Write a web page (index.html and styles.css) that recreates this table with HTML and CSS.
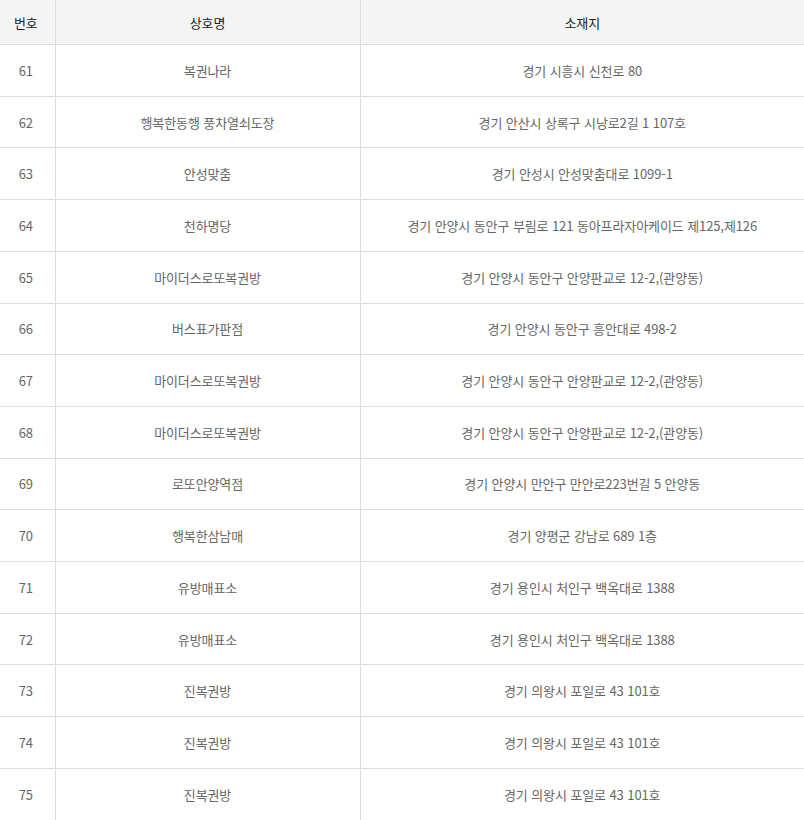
FILE: index.html
```html
<!DOCTYPE html>
<html lang="ko">
<head>
<meta charset="utf-8">
<title>판매점 목록</title>
<link rel="stylesheet" href="styles.css">
</head>
<body>
<table class="store-table">
  <colgroup>
    <col class="col-no">
    <col class="col-name">
    <col class="col-addr">
  </colgroup>
  <thead>
    <tr><th>번호</th><th>상호명</th><th>소재지</th></tr>
  </thead>
  <tbody>
    <tr><td>61</td><td>복권나라</td><td>경기 시흥시 신천로 80</td></tr>
    <tr><td>62</td><td>행복한동행 풍차열쇠도장</td><td>경기 안산시 상록구 시낭로2길 1 107호</td></tr>
    <tr><td>63</td><td>안성맞춤</td><td>경기 안성시 안성맞춤대로 1099-1</td></tr>
    <tr><td>64</td><td>천하명당</td><td>경기 안양시 동안구 부림로 121 동아프라자아케이드 제125,제126</td></tr>
    <tr><td>65</td><td>마이더스로또복권방</td><td>경기 안양시 동안구 안양판교로 12-2,(관양동)</td></tr>
    <tr><td>66</td><td>버스표가판점</td><td>경기 안양시 동안구 흥안대로 498-2</td></tr>
    <tr><td>67</td><td>마이더스로또복권방</td><td>경기 안양시 동안구 안양판교로 12-2,(관양동)</td></tr>
    <tr><td>68</td><td>마이더스로또복권방</td><td>경기 안양시 동안구 안양판교로 12-2,(관양동)</td></tr>
    <tr><td>69</td><td>로또안양역점</td><td>경기 안양시 만안구 만안로223번길 5 안양동</td></tr>
    <tr><td>70</td><td>행복한삼남매</td><td>경기 양평군 강남로 689 1층</td></tr>
    <tr><td>71</td><td>유방매표소</td><td>경기 용인시 처인구 백옥대로 1388</td></tr>
    <tr><td>72</td><td>유방매표소</td><td>경기 용인시 처인구 백옥대로 1388</td></tr>
    <tr><td>73</td><td>진복권방</td><td>경기 의왕시 포일로 43 101호</td></tr>
    <tr><td>74</td><td>진복권방</td><td>경기 의왕시 포일로 43 101호</td></tr>
    <tr><td>75</td><td>진복권방</td><td>경기 의왕시 포일로 43 101호</td></tr>
  </tbody>
</table>
</body>
</html>
```
FILE: styles.css
```css
html, body {
  margin: 0;
  padding: 0;
  background: #fff;
}
body {
  font-family: "Noto Sans CJK KR", "Noto Sans", sans-serif;
  font-size: 13px;
  letter-spacing: -0.1px;
}
.store-table {
  width: 804px;
  border-collapse: collapse;
  table-layout: fixed;
}
.col-no { width: 55px; }
.col-name { width: 305px; }
.col-addr { width: 444px; }
.store-table th,
.store-table td {
  padding: 0;
  text-align: center;
  vertical-align: middle;
  border-bottom: 1px solid #dddddd;
  border-left: 1px solid #dddddd;
}
.store-table th:first-child,
.store-table td:first-child {
  border-left: none;
  padding-right: 3px;
}
.store-table th {
  height: 44px;
  background: #f4f4f4;
  color: #222;
  font-weight: normal;
}
.store-table td {
  height: 50.71px;
  color: #666;
}
```
